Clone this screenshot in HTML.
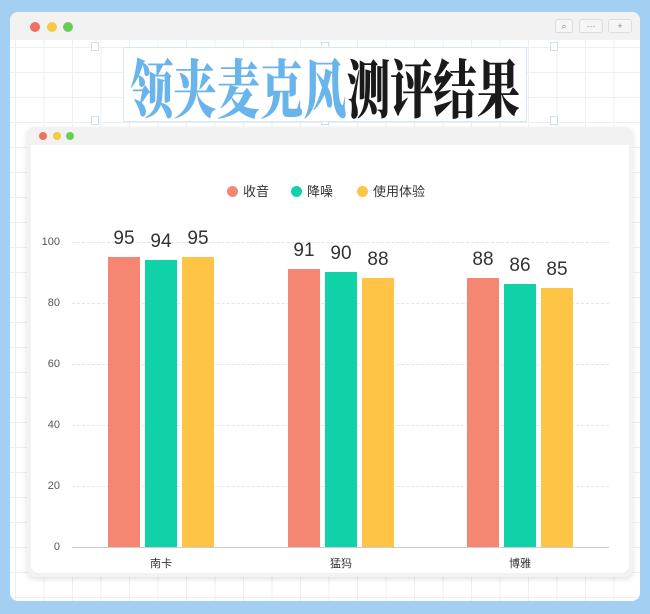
<!DOCTYPE html><html><head><meta charset="utf-8"><style>
*{margin:0;padding:0;box-sizing:border-box}
body{width:650px;height:614px;background:#a3cff2;position:relative;overflow:hidden;font-family:"Liberation Sans","Noto Sans CJK SC",sans-serif}
.outer{position:absolute;left:10px;top:12px;width:630px;height:589px;border-radius:8px;background:#fff;overflow:hidden;
background-image:linear-gradient(#eceff2 1px,transparent 1px),linear-gradient(90deg,#eceff2 1px,transparent 1px);background-size:28.5px 25px;background-position:5px 10px}
.tb{position:absolute;left:0;top:0;width:100%;height:28px;background:#f2f2f2}
.dot{position:absolute;border-radius:50%}
.btn{position:absolute;top:7px;height:14px;border:1px solid #ddd;border-radius:3px;background:#f5f5f5;font-size:9px;color:#888;text-align:center;line-height:12px}
.sq{position:absolute;width:8px;height:9px;border:1px solid #cfe0ec;background:#fff}
.title{position:absolute;left:123px;top:47px;width:404px;height:75px;border:1px solid #d6e6f2;background:#fff;overflow:hidden}
.tt{position:absolute;left:6px;top:5px;font-family:"Noto Serif CJK SC",serif;font-weight:900;font-size:44px;line-height:44px;white-space:nowrap;transform-origin:0 0;transform:scale(0.985,1.45)}
.inner{position:absolute;left:27px;top:127px;width:606px;height:450px;border-radius:8px;background:#f2f2f2;box-shadow:0 2px 6px rgba(0,0,0,.12)}
.content{position:absolute;left:4px;top:18px;width:598px;height:428px;background:#fff;border-radius:0 0 8px 8px}
.bar{position:absolute;width:32px}
.gl{position:absolute;left:72px;width:537px;border-top:1px dashed #e4e4e4}
.yl{position:absolute;left:30px;width:30px;text-align:right;font-size:11px;color:#555}
.v{position:absolute;width:40px;text-align:center;font-size:19px;color:#333}
.xl{position:absolute;font-size:11px;color:#333;width:60px;text-align:center;top:555px}
.lg{position:absolute;top:181px;font-size:13px;color:#333}
.lg i{display:inline-block;width:11px;height:11px;border-radius:50%;vertical-align:-1px;margin-right:5px}
</style></head><body>
<div class="outer">
<div class="tb"></div>
<div class="dot" style="left:20px;top:10px;width:10px;height:10px;background:#f07162"></div>
<div class="dot" style="left:37px;top:10px;width:10px;height:10px;background:#f3c946"></div>
<div class="dot" style="left:53px;top:10px;width:10px;height:10px;background:#6bcb5a"></div>
<div class="btn" style="left:545px;width:18px">⌕</div>
<div class="btn" style="left:569px;width:24px">···</div>
<div class="btn" style="left:598px;width:24px">+</div>
<div class="sq" style="left:81px;top:30px"></div><div class="sq" style="left:311px;top:30px"></div><div class="sq" style="left:540px;top:30px"></div>
<div class="sq" style="left:81px;top:104px"></div><div class="sq" style="left:311px;top:104px"></div><div class="sq" style="left:540px;top:104px"></div>
</div>
<div class="title"><div class="tt"><span style="color:#6ab4ec">领夹麦克风</span><span style="color:#1a1a1a">测评结果</span></div></div>
<div class="inner">
<div class="dot" style="left:12px;top:5px;width:8px;height:8px;background:#f07162"></div>
<div class="dot" style="left:26px;top:5px;width:8px;height:8px;background:#f3c946"></div>
<div class="dot" style="left:39px;top:5px;width:8px;height:8px;background:#6bcb5a"></div>
<div class="content"></div>
</div>
<div class="lg" style="left:227px"><i style="background:#f58772"></i>收音</div>
<div class="lg" style="left:291px"><i style="background:#10d2a8"></i>降噪</div>
<div class="lg" style="left:357px"><i style="background:#fec446"></i>使用体验</div>
<div class="gl" style="top:242px"></div><div class="gl" style="top:303px"></div><div class="gl" style="top:364px"></div><div class="gl" style="top:425px"></div><div class="gl" style="top:486px"></div>
<div style="position:absolute;left:72px;top:547px;width:537px;border-top:1px solid #ccc"></div>
<div class="yl" style="top:236px">100</div><div class="yl" style="top:297px">80</div><div class="yl" style="top:358px">60</div><div class="yl" style="top:419px">40</div><div class="yl" style="top:480px">20</div><div class="yl" style="top:541px">0</div>
<div class="bar" style="left:108px;top:257px;height:290px;background:#f58772"></div>
<div class="bar" style="left:145px;top:260px;height:287px;background:#10d2a8"></div>
<div class="bar" style="left:182px;top:257px;height:290px;background:#fec446"></div>
<div class="bar" style="left:288px;top:269px;height:278px;background:#f58772"></div>
<div class="bar" style="left:325px;top:272px;height:275px;background:#10d2a8"></div>
<div class="bar" style="left:362px;top:278px;height:269px;background:#fec446"></div>
<div class="bar" style="left:467px;top:278px;height:269px;background:#f58772"></div>
<div class="bar" style="left:504px;top:284px;height:263px;background:#10d2a8"></div>
<div class="bar" style="left:541px;top:288px;height:259px;background:#fec446"></div>
<div class="v" style="left:104px;top:228px">95</div><div class="v" style="left:141px;top:231px">94</div><div class="v" style="left:178px;top:228px">95</div>
<div class="v" style="left:284px;top:240px">91</div><div class="v" style="left:321px;top:243px">90</div><div class="v" style="left:358px;top:249px">88</div>
<div class="v" style="left:463px;top:249px">88</div><div class="v" style="left:500px;top:255px">86</div><div class="v" style="left:537px;top:259px">85</div>
<div class="xl" style="left:131px">南卡</div><div class="xl" style="left:311px">猛犸</div><div class="xl" style="left:490px">博雅</div>
</body></html>
